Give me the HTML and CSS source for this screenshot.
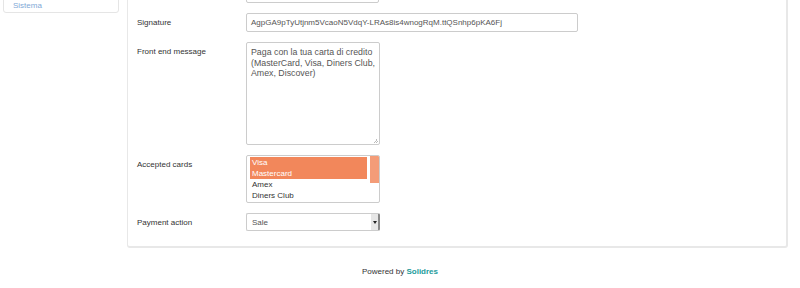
FILE: index.html
```html
<!DOCTYPE html>
<html lang="en">
<head>
    <meta charset="UTF-8">
    <meta name="viewport" content="width=device-width, initial-scale=1.0">
    <title>Solidres - Payment settings</title>
    <link rel="stylesheet" href="styles.css">
</head>
<body>

    <div class="page">
        <aside class="sidebar">
            <ul class="side-nav">
                <li><a href="#">Sistema</a></li>
            </ul>
        </aside>

        <div class="panel">
            <div class="field">
                <label class="field-label"></label>
                <div class="control input short"></div>
            </div>

            <div class="field">
                <label class="field-label">Signature</label>
                <div class="control input wide">AgpGA9pTyUtjnm5VcaoN5VdqY-LRAs8is4wnogRqM.ttQSnhp6pKA6Fj</div>
            </div>

            <div class="field">
                <label class="field-label">Front end message</label>
                <div class="control textarea">
                    Paga con la tua carta di credito (MasterCard, Visa, Diners Club, Amex, Discover)
                    <span class="grip"></span>
                </div>
            </div>

            <div class="field">
                <label class="field-label">Accepted cards</label>
                <div class="control multi">
                    <ul class="options">
                        <li class="selected">Visa</li>
                        <li class="selected">Mastercard</li>
                        <li>Amex</li>
                        <li>Diners Club</li>
                    </ul>
                    <div class="scrollbar"><div class="thumb"></div></div>
                </div>
            </div>

            <div class="field">
                <label class="field-label">Payment action</label>
                <div class="control dropdown">
                    <span>Sale</span>
                    <span class="arrow"></span>
                </div>
            </div>
        </div>
    </div>

    <footer class="footer">
        Powered by <a href="#">Solidres</a>
    </footer>

</body>
</html>
```

FILE: styles.css
```css
body {
    font-family: "Liberation Sans", Arial, sans-serif;
    font-size: 8px;
    color: #333;
    margin: 0;
    background-color: #fff;
}
.page {
    display: grid;
    grid-template-columns: 116px 661px;
    column-gap: 8px;
    padding-left: 3px;
    margin-top: -28px;
}
.side-nav {
    list-style: none;
    margin: 0;
    padding: 0;
    border: 1px solid #e5e5e5;
    border-radius: 0 0 3px 3px;
}
.side-nav li {
    padding: 28px 9px 2px;
}
.side-nav a {
    color: #7fa9d6;
    text-decoration: none;
}
.panel {
    border: 1px solid #e8e8e8;
    border-width: 1px 2px 2px 1px;
    border-radius: 3px;
    padding: 11px 9px 15px;
    display: flex;
    flex-direction: column;
    gap: 10px;
}
.field {
    display: flex;
    align-items: flex-start;
    min-height: 18px;
}
.field-label {
    width: 109px;
    flex-shrink: 0;
    padding-top: 5px;
    color: #333;
}
.control {
    box-sizing: border-box;
    border: 1px solid #ccc;
    border-radius: 2px;
    color: #555;
    background: #fff;
}
.input {
    height: 19px;
    line-height: 17px;
    padding: 0 4px;
    white-space: nowrap;
}
.short {
    width: 133px;
}
.wide {
    width: 332px;
}
.textarea {
    position: relative;
    width: 134px;
    height: 103px;
    padding: 4px 4px 2px;
    font-size: 8.8px;
    line-height: 10.6px;
}
.grip {
    position: absolute;
    right: 1px;
    bottom: 1px;
    width: 5px;
    height: 5px;
    background: linear-gradient(135deg, transparent 50%, #bbb 50%, #bbb 60%, transparent 60%, transparent 75%, #bbb 75%, #bbb 85%, transparent 85%);
}
.multi {
    display: flex;
    width: 134px;
    height: 48px;
    padding: 1px 0 1px 3px;
    overflow: hidden;
}
.options {
    list-style: none;
    margin: 0;
    padding: 0;
    flex: 1;
}
.options li {
    height: 11px;
    line-height: 11px;
    padding-left: 2px;
    margin-right: 3px;
    color: #333;
}
.options li.selected {
    background-color: #f2875b;
    color: #fff;
}
.scrollbar {
    width: 9px;
    margin-top: -1px;
}
.thumb {
    height: 27px;
    background-color: #f49c78;
}
.dropdown {
    display: flex;
    justify-content: space-between;
    align-items: center;
    width: 134px;
    height: 18px;
    padding: 0 0 0 5px;
    border-right: 2px solid #888;
}
.arrow {
    width: 7px;
    height: 16px;
    background: #e6e6e6;
    display: flex;
    align-items: center;
    justify-content: center;
}
.arrow::after {
    content: "";
    border-left: 2px solid transparent;
    border-right: 2px solid transparent;
    border-top: 3px solid #222;
}
.footer {
    text-align: center;
    margin-top: 19px;
    color: #333;
}
.footer a {
    color: #1c9b9b;
    font-weight: bold;
    text-decoration: none;
}
```
